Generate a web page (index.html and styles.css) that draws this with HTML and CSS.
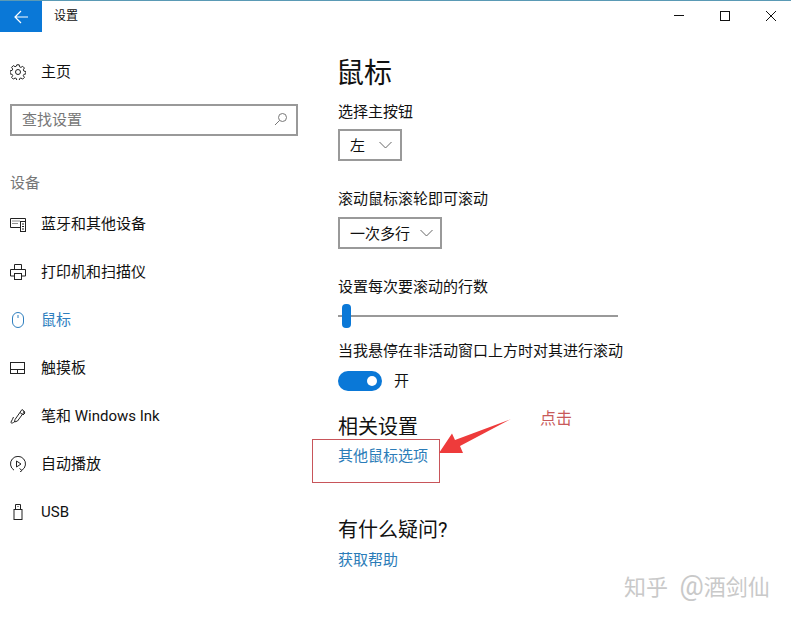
FILE: index.html
```html
<!DOCTYPE html>
<html lang="zh-CN">
<head>
<meta charset="utf-8">
<title>设置</title>
<link rel="stylesheet" href="styles.css">
</head>
<body>
<div class="window">
  <header class="titlebar">
    <div class="back">
      <svg width="14" height="14" viewBox="0 0 14 14" fill="none" stroke="#fff" stroke-width="1.2"><path d="M1 7h13M7 1L1 7l6 6"/></svg>
    </div>
    <div class="title">设置</div>
    <div class="controls">
      <svg class="ctl" width="46" height="32" viewBox="0 0 46 32" stroke="#111" fill="none"><path d="M21 15.500h10"/></svg>
      <svg class="ctl" width="46" height="32" viewBox="0 0 46 32" stroke="#111" fill="none"><rect x="21.500" y="11.500" width="9" height="9"/></svg>
      <svg class="ctl" width="46" height="32" viewBox="0 0 46 32" stroke="#111" fill="none"><path d="M21 11l10 10M31 11l-10 10"/></svg>
    </div>
  </header>
  <div class="body">
    <nav class="sidebar">
      <div class="item home">
        <svg class="icon" width="16" height="16" viewBox="0 0 16 16" fill="none" stroke="#222"><circle cx="8" cy="8" r="2.500"/><path d="M6.800.8h2.400l.4 2 1.300.6 1.800-1.100 1.700 1.700-1.100 1.800.6 1.300 2 .4v2.400l-2 .4-.6 1.300 1.100 1.800-1.700 1.700-1.800-1.100-1.300.6-.4 2H6.800l-.4-2-1.300-.6-1.800 1.100-1.700-1.700 1.100-1.800-.6-1.300-2-.4V6.800l2-.4.6-1.300-1.100-1.800 1.700-1.700 1.800 1.100 1.300-.6z"/></svg>
        <span>主页</span>
      </div>
      <div class="search">
        <span>查找设置</span>
        <svg width="14" height="14" viewBox="0 0 14 14" fill="none" stroke="#777"><circle cx="8.500" cy="5.500" r="4"/><path d="M5.500 8.500L1 13"/></svg>
      </div>
      <div class="group">设备</div>
      <div class="item">
        <svg class="icon" width="16" height="16" viewBox="0 0 16 16" fill="none" stroke="#222"><path d="M10 11.500H.5v-9h15v3"/><path d="M2.500 5h8M2.500 7.500h6" stroke-dasharray="1 1"/><rect x="10.500" y="5.500" width="5" height="10"/><path d="M12 8h2M12 10.500h2M12 13h2"/></svg>
        <span>蓝牙和其他设备</span>
      </div>
      <div class="item">
        <svg class="icon" width="16" height="16" viewBox="0 0 16 16" fill="none" stroke="#222"><path d="M4.500 5V.5h7V5M4 12H.5V5.500h15V12H12"/><rect x="4.500" y="9.500" width="7" height="6"/></svg>
        <span>打印机和扫描仪</span>
      </div>
      <div class="item active">
        <svg class="icon" width="16" height="16" viewBox="0 0 16 16" fill="none" stroke="#2f7fbf"><rect x="2.500" y=".5" width="11" height="15" rx="5.500"/><path d="M8 3v3"/></svg>
        <span>鼠标</span>
      </div>
      <div class="item">
        <svg class="icon" width="16" height="16" viewBox="0 0 16 16" fill="none" stroke="#222"><rect x=".5" y="2.500" width="14" height="11"/><path d="M.5 9.500h14M7.500 9.500v4"/></svg>
        <span>触摸板</span>
      </div>
      <div class="item">
        <svg class="icon" width="16" height="16" viewBox="0 0 16 16" fill="none" stroke="#222"><path d="M5 11.500L12 1.500l2.500 2-7 9.500-3 1zM10 4.500l2.500 2M13.500 3l1.500 2-2 2"/><path d="M4.500 13.500c-1.500 2-4 2-3.500.5s2-3 2.500-5"/></svg>
        <span>笔和 Windows Ink</span>
      </div>
      <div class="item">
        <svg class="icon" width="16" height="16" viewBox="0 0 16 16" fill="none" stroke="#222"><path d="M4 14.200A7.500 7.500 0 1 1 12 14.200M9.500 12.500L12 14.500l-2 1.500"/><path d="M6.500 5v6l4.500-3z"/></svg>
        <span>自动播放</span>
      </div>
      <div class="item">
        <svg class="icon" width="16" height="16" viewBox="0 0 16 16" fill="none" stroke="#222"><rect x="4" y="5.500" width="8" height="10"/><path d="M5.500 5.500V.5h5v5M7 2.500h.5M8.500 2.500H9"/></svg>
        <span>USB</span>
      </div>
    </nav>
    <main class="content">
      <h1>鼠标</h1>
      <div class="label first">选择主按钮</div>
      <div class="select small">
        <span>左</span>
        <svg width="13" height="8" viewBox="0 0 13 8" fill="none" stroke="#666"><path d="M.5 1l6 6 6-6"/></svg>
      </div>
      <div class="label second">滚动鼠标滚轮即可滚动</div>
      <div class="select">
        <span>一次多行</span>
        <svg width="13" height="8" viewBox="0 0 13 8" fill="none" stroke="#666"><path d="M.5 1l6 6 6-6"/></svg>
      </div>
      <div class="label second">设置每次要滚动的行数</div>
      <div class="slider"><div class="thumb"></div></div>
      <div class="label hover">当我悬停在非活动窗口上方时对其进行滚动</div>
      <div class="toggle-row">
        <div class="toggle"><div class="knob"></div></div>
        <span>开</span>
      </div>
      <h2 class="related">相关设置</h2>
      <a class="link">其他鼠标选项</a>
      <h2 class="question">有什么疑问?</h2>
      <a class="link">获取帮助</a>
    </main>
  </div>
</div>
<div class="mark-box"></div>
<svg class="mark-arrow" width="74" height="36" viewBox="0 0 74 36"><path d="M0 34L13 14.500 16 21 72 0 21 27 24 34z" fill="#ee3b3b"/></svg>
<div class="mark-text">点击</div>
<div class="watermark">知乎 <span class="at">@</span>酒剑仙</div>
</body>
</html>
```

FILE: styles.css
```css
* { box-sizing: border-box; }
html, body { margin: 0; padding: 0; }
body {
  position: relative;
  width: 791px;
  height: 619px;
  overflow: hidden;
  background: #fff;
  color: #111;
  font-family: Roboto, "Noto Sans CJK SC", sans-serif;
  font-size: 15px;
}
.window { border-top: 1px solid #5a9ab5; height: 619px; }
.titlebar { display: flex; align-items: stretch; height: 31px; }
.back { width: 42px; background: #0a78d7; display: flex; align-items: center; justify-content: center; }
.title { margin-left: 12px; font-size: 12px; line-height: 30px; }
.controls { margin-left: auto; display: flex; }
.ctl { display: block; margin-top: -1px; }
.body { display: flex; }
.sidebar { width: 338px; padding: 16px 0 0 10px; }
.item { display: flex; align-items: center; height: 48px; }
.item .icon { flex: none; margin-right: 15px; }
.item span { line-height: 20px; }
.item.active { color: #2f7fbf; }
.search {
  width: 288px;
  height: 32px;
  margin-top: 8px;
  border: 2px solid #999;
  padding: 0 10px 3px;
  display: flex;
  align-items: center;
  justify-content: space-between;
  color: #777;
}
.search svg { margin-right: -2px; }
.group { margin-top: 37px; margin-bottom: 7px; line-height: 20px; color: #777; }
.content { flex: 1; padding-top: 24px; }
h1 { margin: 0 0 0 -2px; font-size: 28px; font-weight: 400; line-height: 36px; }
.label { line-height: 20px; }
.label.first { margin-top: 10px; }
.label.second { margin-top: 28px; }
.select {
  display: inline-flex;
  align-items: center;
  gap: 10px;
  height: 32px;
  margin-top: 8px;
  border: 2px solid #999;
  padding: 0 7px 1px 10px;
  vertical-align: top;
}
.select.small { gap: 14px; padding-right: 8px; margin-top: 7px; }
.slider { position: relative; width: 280px; height: 2px; margin-top: 18px; background: #999; }
.thumb { position: absolute; left: 4px; top: -11px; width: 9px; height: 24px; border-radius: 4px; background: #0a78d7; }
.label.hover { margin-top: 24px; }
.toggle-row { display: flex; align-items: center; gap: 12px; margin-top: 10px; height: 20px; }
.toggle-row span { line-height: 20px; }
.toggle { width: 44px; height: 20px; border-radius: 10px; background: #0a78d7; position: relative; }
.knob { position: absolute; right: 5px; top: 5px; width: 10px; height: 10px; border-radius: 50%; background: #fff; }
h2 { margin: 0; font-size: 20px; font-weight: 400; line-height: 28px; }
.related { margin-top: 22px; }
.question { margin-top: 50px; }
.link { display: block; color: #2b7cb8; line-height: 20px; margin-top: 5px; }
.question + .link { margin-top: 6px; }
.mark-box { position: absolute; left: 312px; top: 439px; width: 128px; height: 44px; border: 1px solid #c8555a; }
.mark-arrow { position: absolute; left: 439px; top: 419px; }
.mark-text { position: absolute; left: 540px; top: 409px; color: #c85a5a; font-size: 16px; line-height: 20px; }
.watermark { position: absolute; left: 624px; top: 572px; color: #c9c9c9; font-size: 22px; line-height: 28px; white-space: nowrap; word-spacing: 6px; }
.at { font-size: 27px; }
```
